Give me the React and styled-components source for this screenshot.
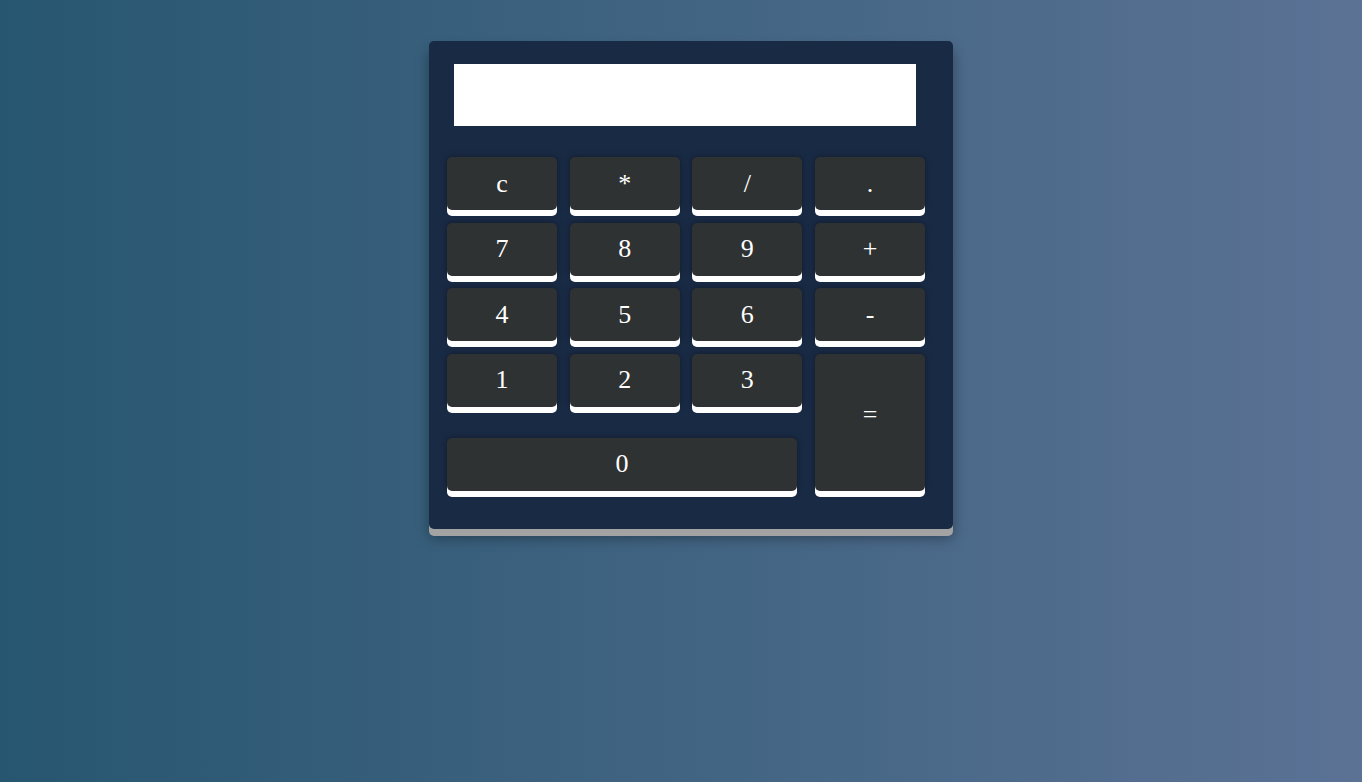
import React from "react";
import styled, { createGlobalStyle } from "styled-components";

const GlobalStyle = createGlobalStyle`
  html, body {
    margin: 0;
    padding: 0;
  }
  body {
    min-height: 100vh;
    background: linear-gradient(to right, #275670, #5b7295);
    font-family: "Liberation Serif", "Times New Roman", serif;
  }
`;

const Page = styled.div`
  display: flex;
  justify-content: center;
  padding: 41px 0 0 20px;
  min-height: 100vh;
  box-sizing: border-box;
`;

const Calculator = styled.div`
  width: 524px;
  height: 488px;
  box-sizing: border-box;
  padding: 23px 0 0 18px;
  background-color: #192a44;
  border-radius: 5px;
  box-shadow: 0 7px 0 #a3a3a3, 0 9px 14px rgba(0, 0, 0, 0.35);
`;

const Display = styled.div`
  width: 462px;
  height: 62px;
  margin-left: 7px;
  background: #ffffff;
`;

const Keys = styled.div`
  display: grid;
  grid-template-columns: repeat(4, 110px);
  grid-template-rows: repeat(4, 53px) 71px;
  gap: 12.67px;
  margin-top: 31px;
`;

const Key = styled.button`
  display: flex;
  align-items: center;
  justify-content: center;
  border: none;
  padding: 0 0 ${(p) => (p.$tall ? "15px" : "0")};
  margin: 0;
  width: ${(p) => (p.$wide ? "350px" : "auto")};
  height: ${(p) => (p.$wide ? "53px" : "auto")};
  grid-column: ${(p) => (p.$wide ? "span 3" : "auto")};
  grid-row: ${(p) => (p.$tall ? "span 2" : "auto")};
  justify-self: ${(p) => (p.$wide ? "start" : "stretch")};
  align-self: ${(p) => (p.$wide ? "end" : "stretch")};
  background-color: #2f3233;
  color: #ffffff;
  font-family: "Liberation Serif", "Times New Roman", serif;
  font-size: 26px;
  border-radius: 5px;
  box-shadow: 0 6px 0 #ffffff, 0 0 6px rgba(0, 0, 0, 0.35);
  cursor: pointer;
`;

const rows = [
  ["c", "*", "/", "."],
  ["7", "8", "9", "+"],
  ["4", "5", "6", "-"],
];

export default function App() {
  return (
    <>
      <GlobalStyle />
      <Page>
        <Calculator>
          <Display />
          <Keys>
            {rows.flat().map((k) => (
              <Key key={k}>{k}</Key>
            ))}
            <Key>1</Key>
            <Key>2</Key>
            <Key>3</Key>
            <Key $tall>=</Key>
            <Key $wide>0</Key>
          </Keys>
        </Calculator>
      </Page>
    </>
  );
}
